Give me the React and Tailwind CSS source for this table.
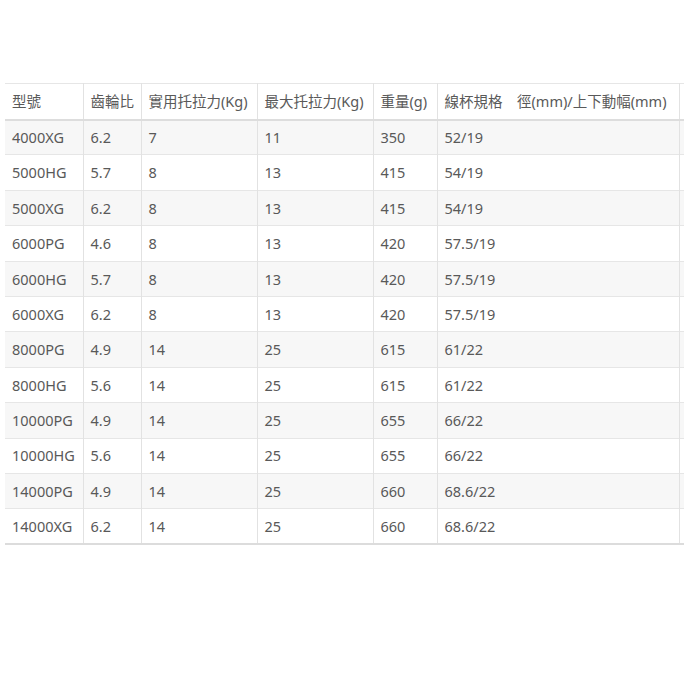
const rows = [
  ["4000XG", "6.2", "7", "11", "350", "52/19"],
  ["5000HG", "5.7", "8", "13", "415", "54/19"],
  ["5000XG", "6.2", "8", "13", "415", "54/19"],
  ["6000PG", "4.6", "8", "13", "420", "57.5/19"],
  ["6000HG", "5.7", "8", "13", "420", "57.5/19"],
  ["6000XG", "6.2", "8", "13", "420", "57.5/19"],
  ["8000PG", "4.9", "14", "25", "615", "61/22"],
  ["8000HG", "5.6", "14", "25", "615", "61/22"],
  ["10000PG", "4.9", "14", "25", "655", "66/22"],
  ["10000HG", "5.6", "14", "25", "655", "66/22"],
  ["14000PG", "4.9", "14", "25", "660", "68.6/22"],
  ["14000XG", "6.2", "14", "25", "660", "68.6/22"],
];

const widths = ["w-[78px]", "w-[58px]", "w-[116px]", "w-[116px]", "w-[64px]", "w-[242px]", "w-[80px]"];

function SpecRow({ cells, index }) {
  const bg = index % 2 === 0 ? "bg-[#f7f7f7]" : "bg-white";
  return (
    <tr className={`h-[35.4px] border-b border-[#e6e6e6] ${bg}`}>
      {cells.map((cell, i) => (
        <td key={i} className="pl-[7px] border-l border-[#e2e2e2] first:border-l-0 whitespace-nowrap">
          {cell}
        </td>
      ))}
      <td className="border-l border-[#e2e2e2]"></td>
    </tr>
  );
}

const App = () => {
  const headers = ["型號", "齒輪比", "實用托拉力(Kg)", "最大托拉力(Kg)", "重量(g)", "線杯規格　徑(mm)/上下動幅(mm)", ""];
  return (
    <div
      className="w-[684px] h-[684px] overflow-hidden bg-white pt-[83px] pl-[5px] text-[14.5px] text-[#595959]"
      style={{ fontFamily: '"Noto Sans", "Noto Sans CJK TC", sans-serif' }}
    >
      <table className="border-collapse table-fixed w-[754px] border-t border-[#e6e6e6] border-b-2 border-b-[#dcdcdc] leading-none">
        <thead>
          <tr className="h-[36px] border-b-2 border-[#dddddd] bg-white">
            {headers.map((h, i) => (
              <th
                key={i}
                className={`${widths[i]} pl-[7px] text-left font-normal whitespace-nowrap border-l border-[#e2e2e2] first:border-l-0`}
              >
                {h}
              </th>
            ))}
          </tr>
        </thead>
        <tbody>
          {rows.map((r, i) => (
            <SpecRow key={i} cells={r} index={i} />
          ))}
        </tbody>
      </table>
    </div>
  );
};

export default App;
